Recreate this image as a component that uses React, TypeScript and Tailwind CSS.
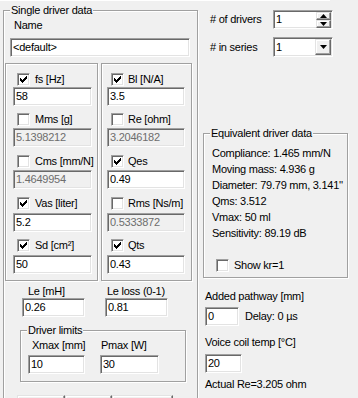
import React from 'react';

const sunken =
  'border border-t-[#a0a0a0] border-l-[#a0a0a0] border-b-white border-r-white shadow-[inset_1px_1px_0_#696969,inset_-1px_-1px_0_#e3e3e3]';
const raised =
  'border border-t-[#e3e3e3] border-l-[#e3e3e3] border-b-[#696969] border-r-[#696969] shadow-[inset_-1px_-1px_0_#a0a0a0,inset_1px_1px_0_#fff] bg-[#f0f0f0]';
const etched = 'border border-[#a0a0a0] shadow-[inset_1px_1px_0_#fff,1px_1px_0_#fff]';

// classic 7x7 tick, one 3px column per x
const tick = [
  [2, 4],
  [3, 5],
  [4, 6],
  [5, 5],
  [6, 4],
  [7, 3],
  [8, 2],
];

function Check({ checked }: { checked?: boolean }) {
  return (
    <div className={`w-[13px] h-[13px] shrink-0 bg-white ${sunken} relative`}>
      {checked && (
        <svg width="11" height="11" viewBox="0 0 11 11" className="absolute left-0 top-0" shapeRendering="crispEdges">
          {tick.map(([x, y]) => (
            <rect key={x} x={x} y={y} width="1" height="3" fill="#000" />
          ))}
        </svg>
      )}
    </div>
  );
}

function Field({ value, disabled, className = '' }: { value: string; disabled?: boolean; className?: string }) {
  return (
    <div
      className={`h-[19px] flex items-center pl-[2px] ${sunken} ${
        disabled ? 'bg-[#f0f0f0] text-[#6d6d6d]' : 'bg-white text-black'
      } ${className}`}
    >
      {value}
    </div>
  );
}

function Group({ title, className = '', children }: { title?: string; className?: string; children?: React.ReactNode }) {
  return (
    <div className={`relative shrink-0 ${etched} ${className}`}>
      {title && (
        <span className="absolute top-[-7px] left-[6px] px-px bg-[#f0f0f0] leading-[13px] whitespace-nowrap">
          {title}
        </span>
      )}
      {children}
    </div>
  );
}

type Param = { label: string; value: string; checked: boolean };

const leftParams: Param[] = [
  { label: 'fs [Hz]', value: '58', checked: true },
  { label: 'Mms [g]', value: '5.1398212', checked: false },
  { label: 'Cms [mm/N]', value: '1.4649954', checked: false },
  { label: 'Vas [liter]', value: '5.2', checked: true },
  { label: 'Sd [cm²]', value: '50', checked: true },
];

const rightParams: Param[] = [
  { label: 'Bl [N/A]', value: '3.5', checked: true },
  { label: 'Re [ohm]', value: '3.2046182', checked: false },
  { label: 'Qes', value: '0.49', checked: true },
  { label: 'Rms [Ns/m]', value: '0.5333872', checked: false },
  { label: 'Qts', value: '0.43', checked: true },
];

// margins between rows, measured from the screenshot
const checkTops = ['mt-[9px]', 'mt-[7px]', 'mt-[8px]', 'mt-[8px]', 'mt-[7px]'];
const fieldTops = ['mt-[1px]', 'mt-[2px]', 'mt-[2px]', 'mt-[3px]', 'mt-[3px]'];

function ParamColumn({ params, side }: { params: Param[]; side: 'left' | 'right' }) {
  return (
    <div className="flex flex-col">
      {params.map((p, i) => (
        <React.Fragment key={p.label}>
          <div className={`flex items-center h-[13px] ${checkTops[i]} ${side === 'left' ? 'ml-[11px]' : 'ml-[9px]'}`}>
            <Check checked={p.checked} />
            <span className={`${side === 'left' ? 'ml-[5px]' : 'ml-[4px]'} whitespace-nowrap`}>{p.label}</span>
          </div>
          <Field
            value={p.value}
            disabled={!p.checked}
            className={`${fieldTops[i]} ${side === 'left' ? 'ml-[7px] w-[79px]' : 'ml-[5px] w-[78px]'}`}
          />
        </React.Fragment>
      ))}
    </div>
  );
}

function DownArrow() {
  return (
    <svg width="7" height="4" viewBox="0 0 7 4">
      <polygon points="0,0 7,0 3.5,4" fill="#000" />
    </svg>
  );
}

function UpArrow() {
  return (
    <svg width="7" height="4" viewBox="0 0 7 4">
      <polygon points="0,4 7,4 3.5,0" fill="#000" />
    </svg>
  );
}

export default function App() {
  return (
    <div className="w-[358px] h-[398px] overflow-hidden bg-[#f0f0f0] text-[11px] leading-[13px] tracking-[-0.25px] text-black font-['Liberation_Sans',Arial,sans-serif]">
      <div className="w-[330px] h-px bg-white" />
      <div className="flex">
        {/* Single driver data */}
        <Group title="Single driver data" className="ml-[3px] mt-[9px] w-[195px] h-[400px]">
          <div className="flex flex-col">
            <span className="ml-[10px] mt-[8px]">Name</span>
            <Field value="<default>" className="ml-[6px] mt-[6px] w-[180px]" />

            <div className="flex mt-[6px]">
              <Group className="ml-[1px] w-[93px] h-[218px]">
                <ParamColumn params={leftParams} side="left" />
              </Group>
              <Group className="ml-[3px] w-[91px] h-[218px]">
                <ParamColumn params={rightParams} side="right" />
              </Group>
            </div>

            <div className="flex mt-[4px] ml-[18px]">
              <div className="flex flex-col w-[63px]">
                <span className="ml-[6px] whitespace-nowrap">Le [mH]</span>
                <Field value="0.26" />
              </div>
              <div className="flex flex-col w-[63px] ml-[20px]">
                <span className="ml-[2px] whitespace-nowrap">Le loss (0-1)</span>
                <Field value="0.81" />
              </div>
            </div>

            <Group title="Driver limits" className="mt-[13px] ml-[16px] w-[166px] h-[52px]">
              <div className="flex mt-[8px] ml-[7px]">
                <div className="flex flex-col w-[57px]">
                  <span className="ml-[4px] whitespace-nowrap">Xmax [mm]</span>
                  <Field value="10" className="mt-[3px]" />
                </div>
                <div className="flex flex-col w-[59px] ml-[15px]">
                  <span className="ml-[1px] whitespace-nowrap">Pmax [W]</span>
                  <Field value="30" className="mt-[3px]" />
                </div>
              </div>
            </Group>

            <div className="flex mt-[13px] ml-[13px]">
              <div className={`w-[48px] h-[22px] ${raised}`} />
              <div className={`w-[47px] h-[22px] ${raised}`} />
              <div className={`w-[61px] h-[22px] ${raised}`} />
            </div>
          </div>
        </Group>

        {/* Right side */}
        <div className="flex flex-col">
          <div className="flex items-center mt-[9px] ml-[12px] h-[19px]">
            <span className="w-[63px] whitespace-nowrap"># of drivers</span>
            <div className={`w-[60px] h-[19px] bg-white ${sunken} flex items-center justify-between`}>
              <span className="pl-[2px]">1</span>
              <div className="flex flex-col mr-px">
                <div className={`w-[15px] h-[8px] ${raised} flex items-center justify-center`}>
                  <UpArrow />
                </div>
                <div className={`w-[15px] h-[8px] ${raised} flex items-center justify-center`}>
                  <DownArrow />
                </div>
              </div>
            </div>
          </div>

          <div className="flex items-center mt-[8px] ml-[12px] h-[20px]">
            <span className="w-[63px] whitespace-nowrap"># in series</span>
            <div className={`w-[60px] h-[20px] bg-white ${sunken} flex items-center justify-between`}>
              <span className="pl-[2px]">1</span>
              <div className={`w-[16px] h-[16px] mr-px ${raised} flex items-center justify-center`}>
                <DownArrow />
              </div>
            </div>
          </div>

          <Group title="Equivalent driver data" className="mt-[76px] ml-[5px] w-[145px] h-[145px]">
            <div className="flex flex-col mt-[11px] ml-[8px] leading-[16px] whitespace-nowrap">
              <span>Compliance: 1.465 mm/N</span>
              <span>Moving mass: 4.936 g</span>
              <span>Diameter: 79.79 mm, 3.141''</span>
              <span>Qms: 3.512</span>
              <span>Vmax: 50 ml</span>
              <span>Sensitivity: 89.19 dB</span>
            </div>
            <div className="flex items-center mt-[18px] ml-[12px] h-[13px]">
              <Check />
              <span className="ml-[5px]">Show kr=1</span>
            </div>
          </Group>

          <div className="flex flex-col ml-[7px] whitespace-nowrap">
            <span className="mt-[12px]">Added pathway [mm]</span>
            <div className="flex items-center mt-[4px]">
              <Field value="0" className="w-[34px]" />
              <span className="ml-[6px]">Delay: 0 µs</span>
            </div>
            <span className="mt-[10px]">Voice coil temp [°C]</span>
            <Field value="20" className="mt-[5px] w-[37px]" />
            <span className="mt-[5px]">Actual Re=3.205 ohm</span>
          </div>
        </div>
      </div>
    </div>
  );
}
